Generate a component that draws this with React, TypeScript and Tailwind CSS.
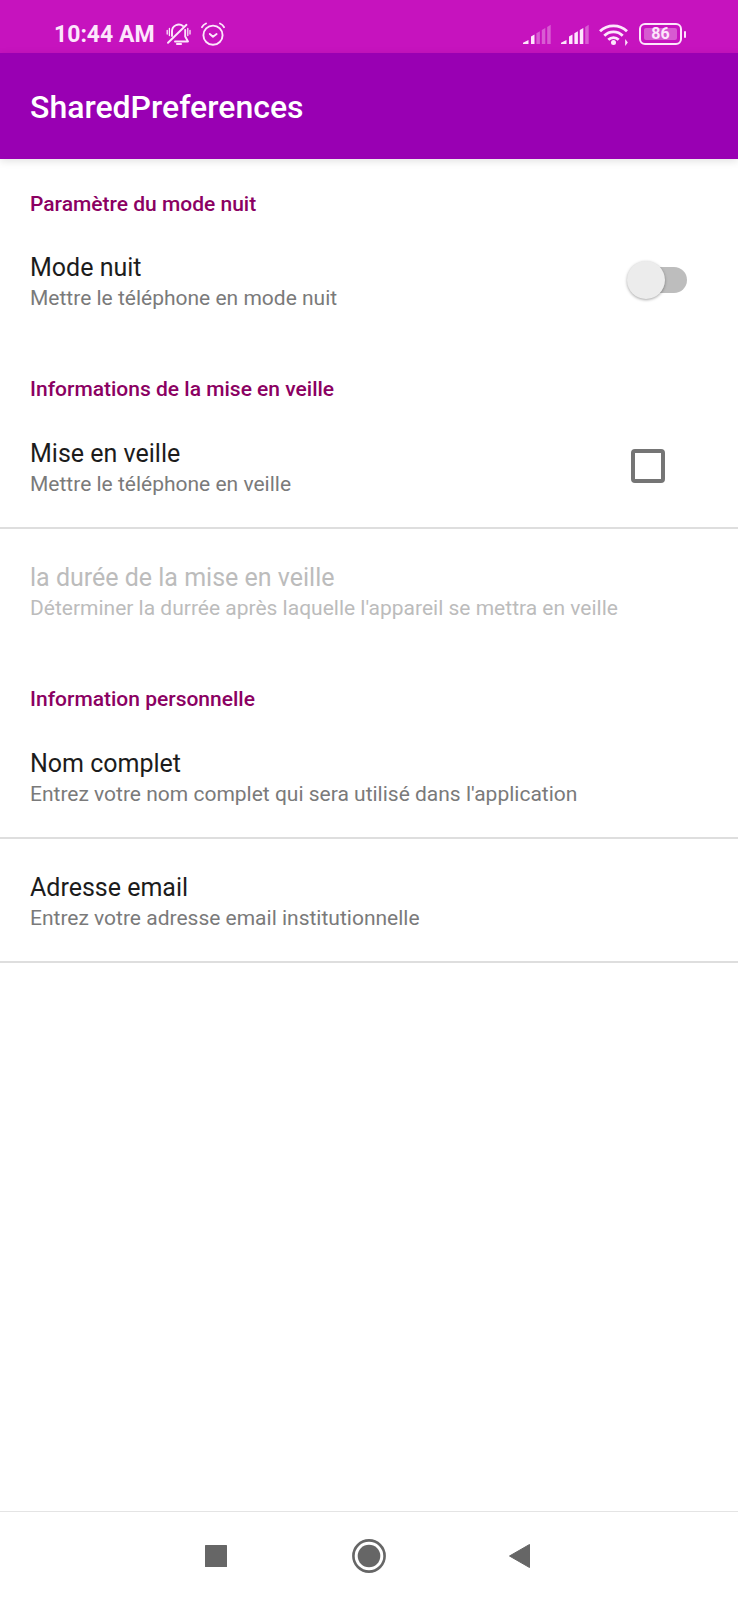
import { useState, type ReactNode } from "react";

function BellOffIcon() {
  return (
    <svg className="h-6 w-[25px]" viewBox="0 0 25 24" fill="none" stroke="currentColor" strokeWidth="1.9" strokeLinecap="round" strokeLinejoin="round" aria-hidden="true">
      <path d="M6 14V9.500a6.800 6.800 0 0 1 11-5.500" />
      <path d="M19.200 8v6.500l2.800 5H9" />
      <path d="M2 20.800 20.500 2.800" />
      <path d="M11 22h4" strokeWidth="2.200" />
      <path d="M3.400 6.500v7M1.200 8.500v3.500M21.800 6.500v7M24 8.500v3.500" strokeWidth="1.300" />
    </svg>
  );
}

function AlarmIcon() {
  return (
    <svg className="size-6" viewBox="0 0 24 24" fill="none" stroke="currentColor" strokeWidth="1.9" strokeLinecap="round" strokeLinejoin="round" aria-hidden="true">
      <circle cx="12" cy="13.200" r="9.600" />
      <path d="M8.800 12l3.200 2.800 3.600-2.800" />
      <path d="M1 5.200C1.800 3.600 3.200 2.300 5 1.500M23 5.200C22.200 3.600 20.800 2.300 19 1.500" />
    </svg>
  );
}

function SignalIcon({ level }: { level: number }) {
  const bars = [
    "M0 20v-1.200L5.500 16v4z",
    "M8 20v-7.500l3.500-2V20z",
    "M13.400 20V9.300l3.500-2V20z",
    "M18.800 20V6l3.500-2V20z",
    "M24.200 20V3l3.500-2.200V20z",
  ];
  return (
    <svg className="h-5 w-7" viewBox="0 0 28 20" fill="currentColor" aria-hidden="true">
      {bars.map((d, i) => (
        <path key={d} d={d} opacity={i < level ? 1 : 0.35} />
      ))}
    </svg>
  );
}

function WifiIcon() {
  return (
    <svg className="h-[23px] w-[30px]" viewBox="0 0 30 23" fill="none" stroke="currentColor" strokeWidth="2.800" aria-hidden="true">
      <path d="M1 8.300a19.500 19.500 0 0 1 27 0" />
      <path d="M5.300 12.700a13 13 0 0 1 18.400 0" />
      <path d="M9.300 16.700a7.400 7.400 0 0 1 10.400 0" />
      <circle cx="14.500" cy="19.600" r="2.500" fill="currentColor" stroke="none" />
      <path d="M26.200 16v7l2.600-3.500z" fill="currentColor" stroke="none" />
    </svg>
  );
}

function Battery({ percent }: { percent: number }) {
  return (
    <div className="flex items-center gap-[2px]">
      <div className="flex h-[22px] w-[43px] rounded-md border-2 border-current p-[3px]">
        <div className="flex flex-1 items-center justify-center rounded-[2px] bg-white/30 text-base leading-4 font-bold">{percent}</div>
      </div>
      <div className="h-[7px] w-[2px] rounded-sm bg-current" />
    </div>
  );
}

function StatusBar() {
  return (
    <div className="flex h-[53px] items-center justify-between bg-[#c613be] pt-[15px] pr-[52px] pl-[54px] text-[#fde6fc]">
      <div className="flex items-center">
        <span className="pt-[2px] text-[23px] leading-7 font-bold">10:44 AM</span>
        <span className="ml-[11px] flex gap-[10px]">
          <BellOffIcon />
          <AlarmIcon />
        </span>
      </div>
      <div className="flex items-center gap-[10px]">
        <SignalIcon level={2} />
        <SignalIcon level={4} />
        <WifiIcon />
        <Battery percent={86} />
      </div>
    </div>
  );
}

function Category({ title, children }: { title: string; children: ReactNode }) {
  return (
    <section className="group">
      <h2 className="px-[30px] pt-9 pb-1 text-[21px] leading-6 font-medium text-[#8b0062] group-first:pt-[33px] group-first:pb-[3px]">{title}</h2>
      {children}
    </section>
  );
}

function RowText({ title, summary }: { title: string; summary: string }) {
  return (
    <span className="flex flex-1 flex-col pt-[33px] pb-7 text-left">
      <span className="text-[25px] leading-8 text-[#1c1c1c] group-disabled/row:text-[#bcbcbc]">{title}</span>
      <span className="text-[21px] leading-[29px] text-[#7a7a7a] group-disabled/row:text-[#bcbcbc]">{summary}</span>
    </span>
  );
}

function ToggleRow({ title, summary, divider, children }: { title: string; summary: string; divider?: boolean; children: ReactNode }) {
  return (
    <label className={`flex items-center pr-[51px] pl-[30px] ${divider ? "border-b-2 border-[#dedede]" : ""}`}>
      <RowText title={title} summary={summary} />
      <span className="flex w-[60px] items-center">{children}</span>
    </label>
  );
}

function ButtonRow({ title, summary, divider, disabled }: { title: string; summary: string; divider?: boolean; disabled?: boolean }) {
  return (
    <button type="button" disabled={disabled} className={`group/row flex w-full px-[30px] ${divider ? "border-b-2 border-[#dedede]" : ""}`}>
      <RowText title={title} summary={summary} />
    </button>
  );
}

export default function App() {
  const [night, setNight] = useState(false);
  const [sleep, setSleep] = useState(false);

  return (
    <div className="flex min-h-screen flex-col bg-white font-[Roboto,sans-serif]">
      <StatusBar />
      <header className="flex h-[106px] items-center bg-[#9900b3] px-[30px] pt-[2px] shadow-[0_2px_8px_rgba(0,0,0,0.12)]">
        <h1 className="text-[32px] leading-10 font-medium text-white">SharedPreferences</h1>
      </header>

      <main className="flex-1">
        <Category title="Paramètre du mode nuit">
          <ToggleRow title="Mode nuit" summary="Mettre le téléphone en mode nuit">
            <input
              type="checkbox"
              role="switch"
              checked={night}
              onChange={(e) => setNight(e.target.checked)}
              className="ml-2 flex h-[26px] w-[52px] appearance-none items-center rounded-full bg-[#bdbdbd] before:-ml-2 before:size-[38px] before:shrink-0 before:rounded-full before:bg-[#ececec] before:shadow-[0_1px_3px_rgba(0,0,0,0.35)] checked:bg-[#d68ac4] checked:before:ml-[22px] checked:before:bg-[#8b0062]"
            />
          </ToggleRow>
        </Category>

        <Category title="Informations de la mise en veille">
          <ToggleRow title="Mise en veille" summary="Mettre le téléphone en veille" divider>
            <input
              type="checkbox"
              checked={sleep}
              onChange={(e) => setSleep(e.target.checked)}
              className="ml-1 size-[34px] appearance-none rounded-[4px] border-4 border-[#757575] checked:border-[#8b0062] checked:bg-[#8b0062]"
            />
          </ToggleRow>
          <ButtonRow
            title="la durée de la mise en veille"
            summary="Déterminer la durrée après laquelle l'appareil se mettra en veille"
            disabled={!sleep}
          />
        </Category>

        <Category title="Information personnelle">
          <ButtonRow title="Nom complet" summary="Entrez votre nom complet qui sera utilisé dans l'application" divider />
          <ButtonRow title="Adresse email" summary="Entrez votre adresse email institutionnelle" divider />
        </Category>
      </main>

      <nav className="flex h-[89px] justify-center border-t border-[#e4e4e4] text-[#666666]">
        <button type="button" aria-label="Applications récentes" className="flex w-[153px] items-center justify-center">
          <svg className="size-[34px]" viewBox="0 0 34 34" fill="currentColor" aria-hidden="true">
            <rect x="6" y="6" width="22" height="22" rx="0.500" />
          </svg>
        </button>
        <button type="button" aria-label="Accueil" className="flex w-[153px] items-center justify-center">
          <svg className="size-[34px]" viewBox="0 0 34 34" fill="currentColor" aria-hidden="true">
            <circle cx="17" cy="17" r="15.600" fill="none" stroke="currentColor" strokeWidth="2.600" />
            <circle cx="17" cy="17" r="11.300" />
          </svg>
        </button>
        <button type="button" aria-label="Retour" className="flex w-[153px] items-center justify-center">
          <svg className="size-[34px]" viewBox="0 0 34 34" fill="currentColor" stroke="currentColor" strokeLinejoin="round" aria-hidden="true">
            <path d="M4.500 17 24.500 5.500v23z" />
          </svg>
        </button>
      </nav>
    </div>
  );
}
